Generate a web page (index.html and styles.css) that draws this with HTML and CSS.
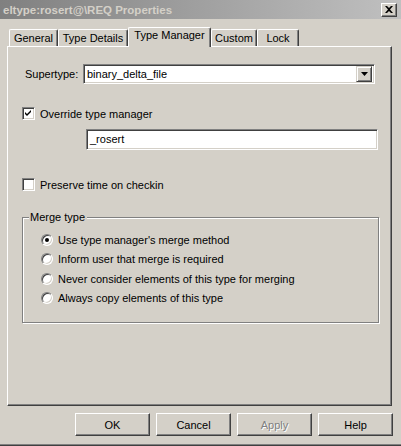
FILE: index.html
```html
<!DOCTYPE html>
<html>
<head>
<meta charset="utf-8">
<link rel="stylesheet" href="styles.css">
</head>
<body>
<div class="window">
  <div class="titlebar">
    <span class="title">eltype:rosert@\REQ Properties</span>
    <span class="close"><svg width="8" height="7" viewBox="0 0 8 7"><path d="M0 0h2l2 2l2-2h2l-3 3.5l3 3.5h-2l-2-2l-2 2h-2l3-3.5z" fill="#000"/></svg></span>
  </div>
  <div class="tabstrip">
    <div class="tab t1">General</div>
    <div class="tab t2">Type Details</div>
    <div class="tab active t3">Type Manager</div>
    <div class="tab t4">Custom</div>
    <div class="tab t5">Lock</div>
  </div>
  <div class="panel">
    <div class="row super">
      <span class="lbl">Supertype:</span>
      <div class="field select">
        <span class="val">binary_delta_file</span>
        <span class="drop"><svg width="7" height="4" viewBox="0 0 7 4"><path d="M0 0h7l-3.5 4z" fill="#000"/></svg></span>
      </div>
    </div>
    <div class="row check r-override">
      <span class="box"><svg width="9" height="9" viewBox="0 0 9 9"><path d="M1 3l2 2l4-4v2l-4 4l-2-2z" fill="#000"/></svg></span>
      <span class="clbl">Override type manager</span>
    </div>
    <div class="field text">_rosert</div>
    <div class="row check r-preserve">
      <span class="box"></span>
      <span class="clbl">Preserve time on checkin</span>
    </div>
    <fieldset class="group">
      <legend>Merge type</legend>
      <div class="radio"><span class="rb on"></span><span>Use type manager's merge method</span></div>
      <div class="radio"><span class="rb"></span><span>Inform user that merge is required</span></div>
      <div class="radio"><span class="rb"></span><span>Never consider elements of this type for merging</span></div>
      <div class="radio"><span class="rb"></span><span>Always copy elements of this type</span></div>
    </fieldset>
  </div>
  <div class="buttons">
    <div class="btn">OK</div>
    <div class="btn">Cancel</div>
    <div class="btn disabled">Apply</div>
    <div class="btn">Help</div>
  </div>
</div>
</body>
</html>
```
FILE: styles.css
```css
html, body { margin: 0; padding: 0; }
body { width: 401px; height: 446px; overflow: hidden; background: #d4d0c8; }
.window {
  width: 401px; height: 446px; box-sizing: border-box;
  background: #d4d0c8;
  font-family: "Liberation Sans", Arial, sans-serif;
  font-size: 11px; color: #000;
  box-shadow: inset 0 -1px #404040, inset 0 -2px #808080;
}
.titlebar {
  height: 19px; display: flex; align-items: center; justify-content: space-between;
  padding: 0 4px 0 3px;
  background: linear-gradient(to right, #808080, #c0c0c0);
}
.title { color: #d4d0c8; font-weight: bold; font-size: 11.5px; }
.close {
  width: 16px; height: 14px; box-sizing: border-box;
  background: #d4d0c8;
  border-top: 1px solid #fff; border-left: 1px solid #fff;
  border-right: 1px solid #404040; border-bottom: 1px solid #404040;
  box-shadow: inset -1px -1px #808080;
  display: flex; align-items: center; justify-content: center;
  padding-right: 1px; padding-bottom: 1px;
}
.close svg { display: block; }
.tabstrip {
  margin-top: 8px; height: 19px; padding-left: 9px;
  display: flex; align-items: flex-end;
}
.tab {
  height: 17px; box-sizing: border-box;
  border-top: 1px solid #fff; border-left: 1px solid #fff;
  border-right: 1px solid #404040;
  box-shadow: inset -1px 0 #808080;
  border-radius: 2px 2px 0 0;
  text-align: center; line-height: 16px;
  background: #d4d0c8;
}
.t1 { width: 49px; }
.t2 { width: 70px; }
.t3 { width: 83px; }
.t4 { width: 46px; }
.t5 { width: 42px; }
.tab.active {
  height: 20px; margin-bottom: -1px; line-height: 15px;
  position: relative; z-index: 1;
}
.panel {
  margin-left: 7px; width: 385px; height: 360px; box-sizing: border-box;
  border-top: 1px solid #fff; border-left: 1px solid #fff;
  border-right: 1px solid #404040; border-bottom: 1px solid #404040;
  box-shadow: inset -1px -1px #808080;
  padding-left: 14px;
}
.row { display: flex; align-items: center; }
.super { margin-top: 17px; }
.lbl { width: 61px; padding-left: 3px; box-sizing: border-box; }
.field {
  width: 292px; box-sizing: border-box; background: #fff;
  border-top: 1px solid #808080; border-left: 1px solid #808080;
  border-right: 1px solid #fff; border-bottom: 1px solid #fff;
  box-shadow: inset 1px 1px #404040, inset -1px -1px #d4d0c8;
  padding-left: 3px;
}
.select { height: 20px; display: flex; align-items: center; justify-content: space-between; padding-right: 2px; }
.drop {
  width: 16px; height: 16px; box-sizing: border-box; background: #d4d0c8;
  border-top: 1px solid #d4d0c8; border-left: 1px solid #d4d0c8;
  border-right: 1px solid #404040; border-bottom: 1px solid #404040;
  box-shadow: inset 1px 1px #fff, inset -1px -1px #808080;
  display: flex; align-items: center; justify-content: center;
}
.drop svg { display: block; }
.check .box {
  width: 13px; height: 13px; box-sizing: border-box; background: #fff;
  border-top: 1px solid #808080; border-left: 1px solid #808080;
  border-right: 1px solid #fff; border-bottom: 1px solid #fff;
  box-shadow: inset 1px 1px #404040, inset -1px -1px #d4d0c8;
  display: flex; align-items: center; justify-content: center;
}
.check .box svg { display: block; }
.clbl { margin-left: 5px; }
.r-override { margin-top: 23px; }
.text { height: 21px; margin-top: 9px; margin-left: 64px; line-height: 19px; }
.r-preserve { margin-top: 28px; }
.group {
  margin: 20px 0 0 0; width: 357px; height: 112px; box-sizing: border-box;
  border: 1px solid #808080;
  box-shadow: 1px 1px 0 #fff, inset 1px 1px 0 #fff;
  padding: 6px 0 0 6px;
  min-width: 0;
}
.group legend { padding: 0 2px 0 1px; margin-left: 0; line-height: 13px; background: #d4d0c8; }
.radio { display: flex; align-items: center; height: 19.5px; margin-left: 12px; }
.rb {
  width: 12px; height: 12px; box-sizing: border-box; border-radius: 50%;
  background: #fff; margin-right: 5px;
  border: 1px solid; border-color: #808080 #fff #fff #808080;
  box-shadow: inset 1px 1px #404040, inset -1px -1px #d4d0c8;
  display: flex; align-items: center; justify-content: center;
}
.rb.on::after { content: ""; width: 4px; height: 4px; border-radius: 50%; background: #000; }
.buttons {
  margin-top: 7px; display: flex; justify-content: flex-end; gap: 6px; padding-right: 8px;
}
.btn {
  width: 75px; height: 23px; box-sizing: border-box;
  border-top: 1px solid #fff; border-left: 1px solid #fff;
  border-right: 1px solid #404040; border-bottom: 1px solid #404040;
  box-shadow: inset -1px -1px #808080;
  display: flex; align-items: center; justify-content: center;
}
.btn.disabled { color: #808080; text-shadow: 1px 1px 0 #fff; }
```
